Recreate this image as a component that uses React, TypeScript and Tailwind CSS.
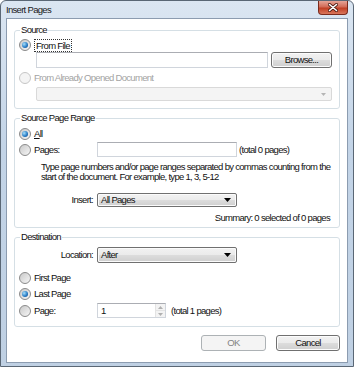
import React from "react";

const Radio = ({ checked = false, disabled = false }: { checked?: boolean; disabled?: boolean }) => (
  <span
    className={
      "w-[12px] h-[12px] rounded-full border flex items-center justify-center shrink-0 " +
      (disabled
        ? "border-[#c6c6c6] bg-[#f4f4f4]"
        : "border-[#8a8a8a] bg-[linear-gradient(135deg,#c9c9c9,#f6f6f6)]")
    }
  >
    {checked && (
      <span className="w-[6px] h-[6px] rounded-full bg-[radial-gradient(circle_at_35%_35%,#a8e0fa,#2a7fc8_55%,#0f3f7c)]" />
    )}
  </span>
);

const Arrow = () => (
  <svg width="7" height="4" viewBox="0 0 7 4" className="shrink-0">
    <path d="M0 0h7L3.5 4z" fill="#000" />
  </svg>
);

const Combo = ({ value, w, h }: { value: string; w: string; h: string }) => (
  <div
    className={
      w +
      " " +
      h +
      " border border-[#707070] rounded-[2px] bg-[linear-gradient(#f2f2f2,#ebebeb_50%,#dddddd_50%,#cfcfcf)] shadow-[inset_0_0_0_1px_#fbfbfb] flex items-center justify-between pl-[3px] pr-[5px]"
    }
  >
    <span>{value}</span>
    <Arrow />
  </div>
);

const TextBox = ({ w, h, children }: { w: string; h: string; children?: React.ReactNode }) => (
  <div className={w + " " + h + " border border-[#d0d5dc] border-t-[#abadb3] bg-white flex items-center pl-[3px]"}>
    {children}
  </div>
);

const Group = ({ title, className, children }: { title: string; className?: string; children: React.ReactNode }) => (
  <fieldset className={"min-w-0 border border-[#d5dfe5] rounded-[3px] px-[4px] pt-0 " + (className ?? "")}>
    <legend className="ml-[1px] px-[1px] leading-[12px]">{title}</legend>
    {children}
  </fieldset>
);

export default function App() {
  return (
    <div className="w-[354px] h-[367px] border border-[#5a6775] rounded-t-[6px] bg-[linear-gradient(#dbe6f2,#c3d4e7_40%,#bfd0e3)] flex flex-col text-[9.5px] leading-[12px] tracking-[-0.7px] text-[#111] font-['Liberation_Sans',Arial,sans-serif] overflow-hidden">
      {/* title bar */}
      <div className="h-[17px] flex items-start justify-between shrink-0">
        <span className="pl-[5px] pt-[3px] leading-[12px] text-[#1a1a1a]">Insert Pages</span>
        <div className="mr-[5px] w-[30px] h-[14px] rounded-b-[4px] border border-t-0 border-[#7a2b1d] bg-[linear-gradient(#e6a497,#d26b57_45%,#c13f24_55%,#d9775c)] flex items-center justify-center">
          <svg width="10" height="9" viewBox="0 0 10 9">
            <path d="M1.5 1.5l7 6M8.5 1.5l-7 6" stroke="#4a1a12" strokeWidth="3" strokeLinecap="round" />
            <path d="M1.5 1.5l7 6M8.5 1.5l-7 6" stroke="#fff" strokeWidth="1.6" strokeLinecap="round" />
          </svg>
        </div>
      </div>

      {/* client area */}
      <div className="flex-1 ml-[5px] mr-[5px] mb-[3px] border border-[#8c9cb0] bg-white px-[7px] pt-[5px] flex flex-col">
        <Group title="Source" className="pb-[7px]">
          <div className="mt-[2px] h-[14px] flex items-center gap-[3px]">
            <Radio checked />
            <span className="border border-dotted border-[#333] px-[1px] leading-[11px]">From File</span>
          </div>
          <div className="h-[16px] ml-[17px] flex items-stretch gap-[3px]">
            <TextBox w="w-[232px]" h="h-[16px]" />
            <button className="w-[61px] h-[16px] border border-[#707070] rounded-[3px] bg-[linear-gradient(#f2f2f2,#ebebeb_50%,#dddddd_50%,#cfcfcf)] shadow-[inset_0_0_0_1px_#fcfcfc] flex items-center justify-center leading-none">
              Browse...
            </button>
          </div>
          <div className="mt-[3px] h-[14px] flex items-center gap-[3px] text-[#a3a3a3]">
            <Radio disabled />
            <span>From Already Opened Document</span>
          </div>
          <div className="mt-[2px] ml-[17px] w-[296px] h-[14px] border border-[#d9d9d9] rounded-[2px] bg-[#f4f4f4] flex items-center justify-end pr-[5px]">
            <svg width="5" height="3" viewBox="0 0 5 3">
              <path d="M0 0h5L2.5 3z" fill="#b5b5b5" />
            </svg>
          </div>
        </Group>

        <Group title="Source Page Range" className="mt-[3px] pb-[4px]">
          <div className="mt-[3px] h-[14px] flex items-center gap-[3px]">
            <Radio checked />
            <span>
              <span className="underline">A</span>ll
            </span>
          </div>
          <div className="mt-[1px] h-[15px] flex items-center">
            <div className="w-[78px] flex items-center gap-[3px]">
              <Radio />
              <span>
                Pa<span className="underline">g</span>es:
              </span>
            </div>
            <TextBox w="w-[140px]" h="h-[15px]" />
            <span className="ml-[2px]">(total 0 pages)</span>
          </div>
          <p className="mt-[5px] ml-[22px] leading-[10px]">
            Type page numbers and/or page ranges separated by commas counting from the
            <br />
            start of the document. For example, type 1, 3, 5-12
          </p>
          <div className="mt-[11px] flex items-center">
            <span className="w-[78px] text-right pr-[4px]">Insert:</span>
            <Combo value="All Pages" w="w-[140px]" h="h-[14px]" />
          </div>
          <div className="mt-[6px] leading-[10px] text-right pr-[5px]">Summary: 0 selected of 0 pages</div>
        </Group>

        <Group title="Destination" className="mt-[3px] pb-[8px]">
          <div className="mt-[4px] flex items-center">
            <span className="w-[78px] text-right pr-[4px]">Location:</span>
            <Combo value="After" w="w-[140px]" h="h-[16px]" />
          </div>
          <div className="mt-[8px] h-[14px] flex items-center gap-[3px]">
            <Radio />
            <span>First Page</span>
          </div>
          <div className="mt-[2px] h-[14px] flex items-center gap-[3px]">
            <Radio checked />
            <span>Last Page</span>
          </div>
          <div className="mt-[2px] h-[15px] flex items-center">
            <div className="w-[78px] flex items-center gap-[3px]">
              <Radio />
              <span>Page:</span>
            </div>
            <div className="w-[69px] h-[15px] border border-[#d0d5dc] border-t-[#abadb3] bg-white flex">
              <span className="flex-1 pl-[3px] leading-[13px]">1</span>
              <div className="w-[10px] flex flex-col border-l border-[#e3e3e3]">
                <div className="flex-1 bg-[#f3f3f3] border-b border-[#e3e3e3] flex items-center justify-center">
                  <svg width="5" height="3" viewBox="0 0 5 3">
                    <path d="M0 3h5L2.5 0z" fill="#b0b0b0" />
                  </svg>
                </div>
                <div className="flex-1 bg-[#f3f3f3] flex items-center justify-center">
                  <svg width="5" height="3" viewBox="0 0 5 3">
                    <path d="M0 0h5L2.5 3z" fill="#b0b0b0" />
                  </svg>
                </div>
              </div>
            </div>
            <span className="ml-[5px]">(total 1 pages)</span>
          </div>
        </Group>

        <div className="mt-[8px] flex justify-end gap-[10px]">
          <button className="w-[65px] h-[16px] border border-[#adb2b5] rounded-[3px] bg-[#f4f4f4] text-[#838383] flex items-center justify-center leading-none">
            OK
          </button>
          <button className="w-[64px] h-[16px] border border-[#707070] rounded-[3px] bg-[linear-gradient(#f2f2f2,#ebebeb_50%,#dddddd_50%,#cfcfcf)] shadow-[inset_0_0_0_1px_#fcfcfc] flex items-center justify-center leading-none">
            Cancel
          </button>
        </div>
      </div>
    </div>
  );
}
